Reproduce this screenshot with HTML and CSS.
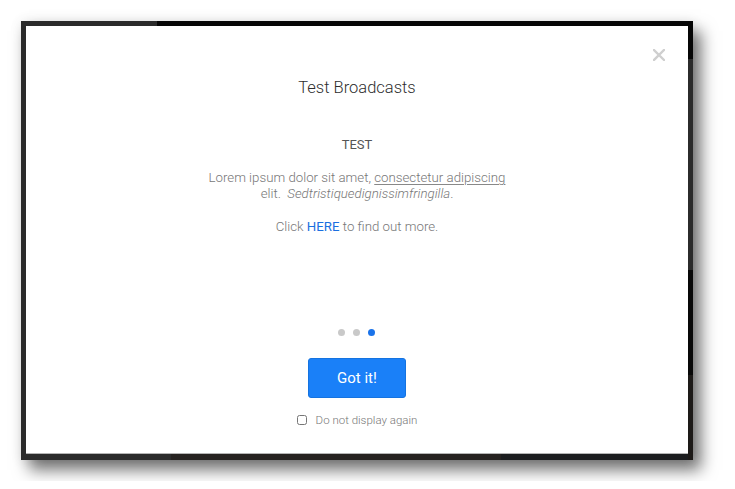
FILE: index.html
```html
<!DOCTYPE html>
<html>
    <head>
        <title>Test Broadcasts</title>
        <link rel="stylesheet" href="styles.css">
    </head>
    <body>
        <div class="frame">
            <div class="modal">
                <button type="button" class="close" aria-label="Close">
                    <svg width="12" height="12" viewBox="0 0 12 12">
                        <path d="M1 1 L11 11 M11 1 L1 11" stroke="#cfcfcf" stroke-width="2.4" stroke-linecap="square"/>
                    </svg>
                </button>

                <h1 class="title">Test Broadcasts</h1>

                <div class="slide">
                    <h2>TEST</h2>
                    <p>Lorem ipsum dolor sit amet, <u>consectetur adipiscing</u><br>elit.&nbsp; <em>Sedtristiquedignissimfringilla</em>.</p>
                    <p>Click <a href="#">HERE</a> to find out more.</p>
                </div>

                <div class="footer">
                    <div class="dots">
                        <span class="dot"></span>
                        <span class="dot"></span>
                        <span class="dot active"></span>
                    </div>
                    <button type="button" class="gotit">Got it!</button>
                    <label class="dismiss">
                        <input type="checkbox">
                        <span>Do not display again</span>
                    </label>
                </div>
            </div>
        </div>
    </body>
</html>
```

FILE: styles.css
```css
body {
    margin: 0;
    padding: 21px;
    background: #fff;
    font-family: Roboto, "Liberation Sans", sans-serif;
}

.frame {
    width: 672px;
    height: 439px;
    box-sizing: border-box;
    padding: 5px 5px 6px 5px;
    background:
        linear-gradient(#060606, #060606) right top / 5px 38px no-repeat,
        linear-gradient(#080808, #080808) right 249px / 5px 105px no-repeat,
        linear-gradient(#1d1a18, #1d1a18) right 354px / 5px 100% no-repeat,
        linear-gradient(#060606, #060606) 136px top / 100% 5px no-repeat,
        linear-gradient(90deg, #2b2b2b 0 150px, #262220 150px 480px, #1c1d1f 480px) left bottom / 100% 6px no-repeat,
        #2b2b2b;
    box-shadow: 8px 10px 15px rgba(0, 0, 0, 0.55), 0 0 12px rgba(0, 0, 0, 0.08);
}

.modal {
    position: relative;
    height: 100%;
    box-sizing: border-box;
    background: #fff;
    border-bottom: 1px solid #b5b5b5;
    display: flex;
    flex-direction: column;
    align-items: center;
    padding-top: 52px;
    padding-bottom: 26px;
}

.close {
    position: absolute;
    top: 23px;
    right: 23px;
    width: 12px;
    height: 12px;
    padding: 0;
    border: none;
    background: none;
    display: flex;
}

.title {
    margin: 0;
    font-size: 16.5px;
    line-height: 20px;
    font-weight: 300;
    color: #2e2e2e;
}

.slide {
    margin-top: 39px;
    text-align: center;
    color: #777;
    font-weight: 300;
    font-size: 13.25px;
    line-height: 16px;
}

.slide h2 {
    margin: 0 0 17px 0;
    font-size: 13px;
    line-height: 16px;
    font-weight: 400;
    color: #555;
}

.slide p {
    margin: 0 0 17px 0;
}

.slide u {
    text-decoration-color: #888;
    text-underline-offset: 2px;
}

.slide a {
    color: #1a6fe0;
    font-weight: 400;
    text-decoration: none;
}

.footer {
    margin-top: auto;
    display: flex;
    flex-direction: column;
    align-items: center;
}

.dots {
    display: flex;
    gap: 8px;
}

.dot {
    width: 7px;
    height: 7px;
    border-radius: 50%;
    background: #c9c9c9;
}

.dot.active {
    background: #1a73ea;
}

.gotit {
    margin-top: 22px;
    width: 98px;
    height: 40px;
    border: 1px solid #1573e0;
    border-radius: 3px;
    background: #1a80f8;
    color: #fff;
    font-family: Roboto, "Liberation Sans", sans-serif;
    font-size: 15px;
    font-weight: 400;
}

.dismiss {
    margin-top: 15px;
    display: flex;
    align-items: center;
    gap: 9px;
    font-size: 11.5px;
    line-height: 14px;
    font-weight: 300;
    color: #777;
}

.dismiss input {
    margin: 0;
    width: 10px;
    height: 10px;
}
```
